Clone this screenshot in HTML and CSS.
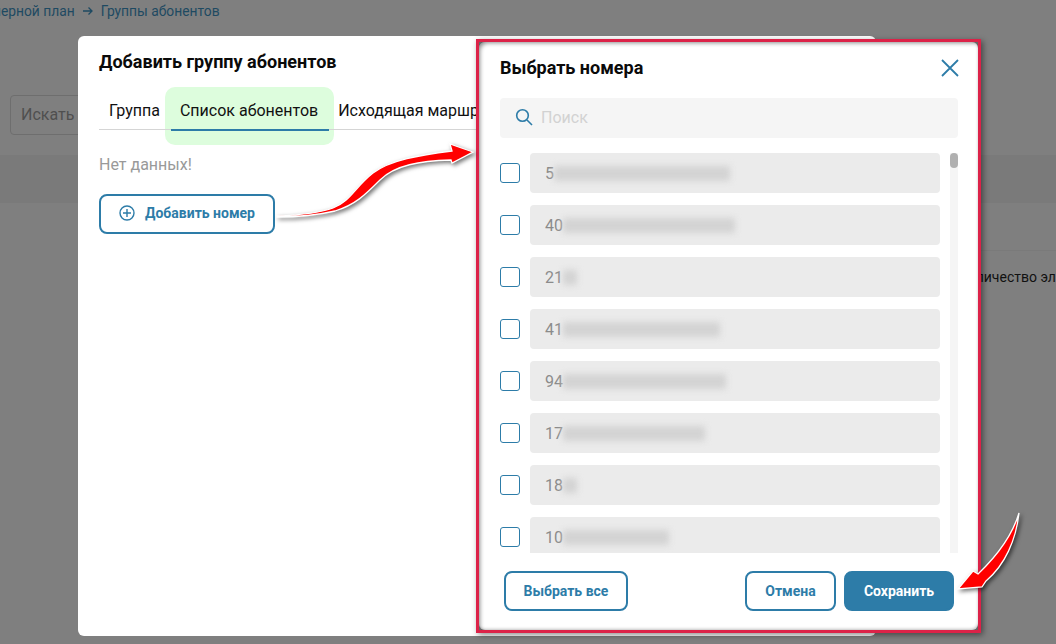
FILE: index.html
```html
<!DOCTYPE html>
<html lang="en">
<head>
  <meta charset="UTF-8" />
  <title>Группы абонентов</title>
  <link rel="stylesheet" href="styles.css">
</head>
<body>

  <div class="page">
    <div class="crumbs">
      <span>Номерной план</span>
      <svg width="10" height="10" viewBox="0 0 10 10" fill="none" stroke="#1e4a62" stroke-width="1.3">
        <path d="M0 5h9M5.5 1.5L9 5 5.5 8.5"/>
      </svg>
      <span>Группы абонентов</span>
    </div>
    <div class="search-old">Искать</div>
    <div class="band"></div>
    <div class="total">Количество элементов</div>
  </div>

  <section class="modal">
    <h2>Добавить группу абонентов</h2>
    <div class="tabs">
      <span class="tab">Группа</span>
      <span class="tab tab-active">Список абонентов</span>
      <span class="tab">Исходящая маршрутизация</span>
    </div>
    <p class="empty">Нет данных!</p>
    <button class="btn btn-add">
      <svg width="16" height="16" viewBox="0 0 16 16" fill="none" stroke="#2d7ca8" stroke-width="1.4">
        <circle cx="8" cy="8" r="7"/>
        <path d="M8 4v8M4 8h8"/>
      </svg>
      Добавить номер
    </button>
  </section>

  <div class="frame">
    <section class="picker">
      <div class="picker-head">
        <h2>Выбрать номера</h2>
        <svg class="close" width="20" height="20" viewBox="0 0 20 20" fill="none" stroke="#2d7ca8" stroke-width="1.8">
          <path d="M2 2l16 16M18 2L2 18"/>
        </svg>
      </div>

      <div class="search">
        <svg width="18" height="18" viewBox="0 0 18 18" fill="none" stroke="#2d7ca8" stroke-width="1.6">
          <circle cx="7.5" cy="7.5" r="5.8"/>
          <path d="M12 12l5 5"/>
        </svg>
        <span>Поиск</span>
      </div>

      <div class="picker-body">
        <div class="list">
          <div class="item"><i class="check"></i><div class="num">5<b class="blur w1"></b></div></div>
          <div class="item"><i class="check"></i><div class="num">40<b class="blur w2"></b></div></div>
          <div class="item"><i class="check"></i><div class="num">21<b class="blur w3"></b></div></div>
          <div class="item"><i class="check"></i><div class="num">41<b class="blur w4"></b></div></div>
          <div class="item"><i class="check"></i><div class="num">94<b class="blur w5"></b></div></div>
          <div class="item"><i class="check"></i><div class="num">17<b class="blur w6"></b></div></div>
          <div class="item"><i class="check"></i><div class="num">18<b class="blur w3"></b></div></div>
          <div class="item"><i class="check"></i><div class="num">10<b class="blur w7"></b></div></div>
        </div>
        <div class="scrollbar"><div class="thumb"></div></div>
      </div>

      <div class="picker-foot">
        <button class="btn btn-all">Выбрать все</button>
        <button class="btn btn-cancel">Отмена</button>
        <button class="btn btn-save">Сохранить</button>
      </div>
    </section>
  </div>

  <svg class="arrows" width="1056" height="644" viewBox="0 0 1056 644">
    <path d="M277 216C300 215 320 213 333 208C350 202 355 187 373 173C390 160 420 155 452 151L450 144L473 152L452 163L451 160C420 161 395 165 380 180C365 195 355 205 335 211C318 215 300 217 277 217Z"/>
    <path d="M1019 513C1013 533 1000 553 978 574L973 571L958 589L982 587L986 581C1005 565 1016 540 1019 513Z"/>
  </svg>

</body>
</html>
```

FILE: styles.css
```css
* {
  box-sizing: border-box;
}

body {
  margin: 0;
  width: 1056px;
  height: 644px;
  overflow: hidden;
  position: relative;
  background: #7f7f7f;
  font-family: Roboto, Arial, sans-serif;
  color: #000;
}

h2 {
  margin: 0;
  font-size: 18px;
  line-height: 24px;
  font-weight: 700;
  color: #0a0a0a;
}

/* dimmed page behind the dialogs */
.crumbs {
  display: flex;
  align-items: center;
  gap: 8px;
  margin-left: -27px;
  padding-top: 2px;
  font-size: 13.8px;
  line-height: 18px;
  color: #1e4a62;
}

.search-old {
  width: 200px;
  height: 40px;
  margin: 75px 0 0 10px;
  padding: 0 10px;
  border: 1px solid #6e6e6e;
  border-radius: 4px;
  font-size: 16px;
  line-height: 38px;
  color: #4f4f4f;
}

.band {
  height: 48px;
  margin-top: 20px;
  background: #7a7a7a;
}

.total {
  margin: 47px 0 0 959px;
  padding-top: 17px;
  border-top: 1px solid #7a7a7a;
  font-size: 14px;
  line-height: 18px;
  white-space: nowrap;
  color: #111;
}

/* left dialog */
.modal {
  position: absolute;
  left: 78px;
  top: 36px;
  z-index: 1;
  width: 798px;
  height: 600px;
  padding: 14px 21px;
  background: #fff;
  border-radius: 6px;
}

.tabs {
  display: flex;
  height: 43px;
  margin-top: 13px;
  padding-left: 1px;
  border-bottom: 1px solid #d5d5d5;
  font-size: 16px;
  white-space: nowrap;
}

.tab {
  position: relative;
  padding: 14px 9px 0;
  line-height: 20px;
  color: #111;
}

.tab-active {
  margin-left: 2px;
  padding: 14px 11px 0 9px;
  height: 44px;
  border-bottom: 2px solid #2d7ca8;
}

.tab-active::before {
  content: "";
  position: absolute;
  left: -6px;
  right: -5px;
  top: 0;
  height: 58px;
  background: #ddfddd;
  border-radius: 10px;
  z-index: -1;
}

.empty {
  margin: 25px 0 0;
  font-size: 16px;
  line-height: 20px;
  color: #999;
}

.btn {
  height: 40px;
  border: 2px solid #2d7ca8;
  border-radius: 8px;
  background: #fff;
  font-family: Roboto, Arial, sans-serif;
  font-size: 14px;
  font-weight: 700;
  color: #2d7ca8;
  cursor: pointer;
}

.btn-add {
  display: flex;
  align-items: center;
  gap: 10px;
  width: 176px;
  margin-top: 19px;
  padding: 0 0 2px 18px;
}

/* right dialog inside the red marker frame */
.frame {
  position: absolute;
  left: 476px;
  top: 39px;
  z-index: 2;
  width: 505px;
  height: 594px;
  border: 3px solid #dc2248;
  background: #666;
  box-shadow: 2px 2px 6px rgba(0, 0, 0, 0.45);
}

.picker {
  height: 100%;
  padding: 14px 20px 0 21px;
  background: #fff;
  border-radius: 6px;
  box-shadow: inset 3px 3px 4px -2px rgba(0, 0, 0, 0.45), inset -1px -2px 3px -1px rgba(0, 0, 0, 0.25);
}

.picker-head {
  display: flex;
  justify-content: space-between;
  align-items: center;
}

.close {
  margin-right: -2px;
}

.search {
  display: flex;
  align-items: center;
  gap: 8px;
  height: 40px;
  margin-top: 18px;
  padding: 0 0 2px 15px;
  background: #f5f5f5;
  border-radius: 4px;
  font-size: 16px;
  color: #d2d2d2;
}

.picker-body {
  display: flex;
  justify-content: space-between;
  height: 400px;
  margin-top: 15px;
  overflow: hidden;
}

.list {
  display: flex;
  flex-direction: column;
  gap: 12px;
  width: 440px;
}

.item {
  display: flex;
  align-items: center;
  flex: none;
  gap: 10px;
  height: 40px;
}

.check {
  flex: none;
  width: 20px;
  height: 20px;
  border: 1px solid #2d7ca8;
  border-radius: 3px;
}

.num {
  display: flex;
  align-items: center;
  width: 410px;
  height: 40px;
  padding-left: 15px;
  background: #ebebeb;
  border-radius: 4px;
  font-size: 16px;
  color: #8b8b8b;
}

.blur {
  height: 15px;
  background: #d3d3d3;
  filter: blur(3px);
}

.w1 { width: 176px; }
.w2 { width: 172px; }
.w3 { width: 14px; }
.w4 { width: 157px; }
.w5 { width: 163px; }
.w6 { width: 142px; }
.w7 { width: 106px; }

.scrollbar {
  width: 8px;
  background: #f5f5f5;
}

.thumb {
  height: 15px;
  background: #b0b0b0;
  border-radius: 4px;
}

.picker-foot {
  display: flex;
  gap: 8px;
  margin-top: 18px;
  padding: 0 4px;
}

.btn-all {
  width: 124px;
  margin-right: auto;
}

.btn-cancel {
  width: 91px;
}

.btn-save {
  width: 110px;
  background: #2d7ca8;
  color: #fff;
}

/* red annotation arrows */
.arrows {
  position: absolute;
  left: 0;
  top: 0;
  z-index: 3;
  filter: drop-shadow(2px 2px 2px rgba(0, 0, 0, 0.55));
}

.arrows path {
  fill: #f00;
  stroke: #fff;
  stroke-width: 1.3;
}
```
